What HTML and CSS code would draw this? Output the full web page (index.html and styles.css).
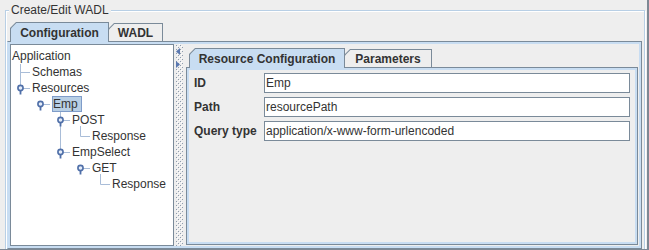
FILE: index.html
```html
<!DOCTYPE html>
<html lang="en">
<head>
  <meta charset="UTF-8" />
  <title>Create/Edit WADL</title>
  <link rel="stylesheet" href="styles.css">
</head>
<body>
  <div class="frame">
    <div class="titled">
      <span class="titled-caption">Create/Edit WADL</span>

      <div class="tabbed outer">
        <div class="tabstrip">
          <div class="tab selected tab-config"><div class="tab-face">Configuration</div></div>
          <div class="tab tab-wadl"><div class="tab-face">WADL</div></div>
        </div>
        <div class="tabbody outer-body">
          <div class="split">

            <!-- resource tree -->
            <div class="tree">
              <svg class="tree-lines" width="162" height="200" viewBox="0 0 162 200">
                <g stroke="#a9bdd8" stroke-width="1" fill="none">
                  <path d="M9.5 19V40M9.5 27.5H19" />
                  <path d="M12 43.5H19" />
                  <path d="M32 59.5H39" />
                  <path d="M49.5 66V104M52 75.5H59M52 107.5H59" />
                  <path d="M69.5 81V91.5H79" />
                  <path d="M72 123.5H79" />
                  <path d="M89.5 129V139.5H99" />
                </g>
                <g class="knob">
                  <circle cx="9.5" cy="43" r="2.6" />
                  <path d="M9.5 45.5V49.5" />
                  <circle cx="29.5" cy="59" r="2.6" />
                  <path d="M29.5 61.5V65.5" />
                  <circle cx="49.5" cy="75" r="2.6" />
                  <path d="M49.5 77.5V81.5" />
                  <circle cx="49.5" cy="107" r="2.6" />
                  <path d="M49.5 109.5V113.5" />
                  <circle cx="69.5" cy="123" r="2.6" />
                  <path d="M69.5 125.5V129.5" />
                </g>
              </svg>
              <div class="node lv0"><span class="node-label">Application</span></div>
              <div class="node lv1"><span class="node-label">Schemas</span></div>
              <div class="node lv1"><span class="node-label">Resources</span></div>
              <div class="node lv2"><span class="node-label selected">Emp</span></div>
              <div class="node lv3"><span class="node-label">POST</span></div>
              <div class="node lv4"><span class="node-label">Response</span></div>
              <div class="node lv3"><span class="node-label">EmpSelect</span></div>
              <div class="node lv4"><span class="node-label">GET</span></div>
              <div class="node lv5"><span class="node-label">Response</span></div>
            </div>

            <!-- split pane divider -->
            <div class="divider">
              <svg width="10" height="202" viewBox="0 0 10 202">
                <defs>
                  <pattern id="bumps" x="2" y="1" width="4" height="4" patternUnits="userSpaceOnUse">
                    <rect x="0" y="0" width="1" height="1" fill="#8f9cad" />
                    <rect x="1" y="1" width="1" height="1" fill="#ffffff" />
                    <rect x="2" y="2" width="1" height="1" fill="#8f9cad" />
                    <rect x="3" y="3" width="1" height="1" fill="#ffffff" />
                  </pattern>
                </defs>
                <rect x="2" y="0" width="7" height="202" fill="url(#bumps)" />
                <polygon points="6,4 2,7.5 6,11" fill="#5a78b0" />
                <polygon points="2,17 6,20.5 2,24" fill="#5a78b0" />
              </svg>
            </div>

            <!-- resource editor -->
            <div class="right">
              <div class="tabbed inner">
                <div class="tabstrip">
                  <div class="tab selected tab-resource"><div class="tab-face">Resource Configuration</div></div>
                  <div class="tab tab-params"><div class="tab-face">Parameters</div></div>
                </div>
                <div class="tabbody inner-body">
                  <div class="form">
                    <label class="form-label">ID</label>
                    <div class="field">Emp</div>
                    <label class="form-label">Path</label>
                    <div class="field">resourcePath</div>
                    <label class="form-label">Query type</label>
                    <div class="field">application/x-www-form-urlencoded</div>
                  </div>
                </div>
              </div>
            </div>

          </div>
        </div>
      </div>
    </div>
  </div>
</body>
</html>
```

FILE: styles.css
```css
body {
  margin: 0;
  background: #eeeeee;
  color: #333333;
  font-family: "Liberation Sans", Arial, sans-serif;
  font-size: 12px;
}

.frame {
  width: 649px;
  height: 250px;
  box-sizing: border-box;
  padding: 10px 0 0 5px;
  border-right: 2px solid #7d8894;
  border-bottom: 1px solid #7d8894;
  overflow: hidden;
  background: #eeeeee;
}

.titled {
  position: relative;
  width: 640px;
  height: 260px;
  box-sizing: border-box;
  padding-top: 11px;
  border: 1px solid #b8cfe5;
  box-shadow: inset 1px 1px 0 #ffffff, 1px 1px 0 #ffffff;
}

.titled-caption {
  position: absolute;
  top: -8px;
  left: 3px;
  padding: 0 2px;
  line-height: 14px;
  background: #eeeeee;
}

/* tabs */

.tabbed.outer {
  width: 635px;
  margin-left: 1px;
}

.tabstrip {
  display: flex;
  align-items: flex-start;
  height: 19px;
  padding-left: 3px;
}

.tab {
  position: relative;
  z-index: 1;
  height: 18px;
  margin-top: 1px;
  box-sizing: border-box;
  padding: 1px 1px 0 1px;
  background: #7a8a99;
  clip-path: polygon(0 6px, 6px 0, 100% 0, 100% 100%, 0 100%);
}

.tab + .tab {
  margin-left: -1px;
}

.tab.selected {
  z-index: 2;
  height: 20px;
  margin-top: 0;
  margin-bottom: -1px;
}

.tab-face {
  height: 100%;
  display: flex;
  align-items: center;
  justify-content: center;
  font-weight: bold;
  background: #eeeeee;
  clip-path: polygon(0 5.4px, 5.4px 0, 100% 0, 100% 100%, 0 100%);
}

.tab.selected .tab-face {
  background: #c8ddf2;
}

.tab-config { width: 99px; }
.tab-wadl { width: 55px; }
.tab-resource { width: 156px; }
.tab-params { width: 88px; }

.tabbody {
  box-sizing: border-box;
  border: 1px solid #7a8a99;
  padding: 2px;
  background: #c8ddf2;
}

.outer-body {
  height: 208px;
  border-left-color: #c8ddf2;
}

/* split pane */

.split {
  display: flex;
  height: 202px;
  background: #eeeeee;
}

.tree {
  position: relative;
  width: 164px;
  box-sizing: border-box;
  padding-top: 3px;
  border: 1px solid #7a8a99;
  background: #ffffff;
}

.tree-lines {
  position: absolute;
  top: 0;
  left: 0;
}

.knob circle {
  fill: #e4ecf8;
  stroke: #4f6fa8;
  stroke-width: 1.6;
}

.knob path {
  stroke: #4f6fa8;
  stroke-width: 1.8;
}

.node {
  position: relative;
  display: flex;
  align-items: center;
  height: 16px;
  white-space: nowrap;
}

.lv0 { padding-left: 0; }
.lv1 { padding-left: 20px; }
.lv2 { padding-left: 40px; }
.lv3 { padding-left: 60px; }
.lv4 { padding-left: 80px; }
.lv5 { padding-left: 100px; }

.node-label {
  display: block;
  line-height: 14px;
  border: 1px solid transparent;
}

.node-label.selected {
  margin-left: 1px;
  padding-right: 3px;
  background: #b8cfe5;
  border-color: #7f9cc9;
}

.divider {
  width: 10px;
  flex: none;
}

.divider svg {
  display: block;
}

.right {
  flex: 1;
  display: flex;
  flex-direction: column;
  padding: 4px 1px 1px 2px;
}

.tabbed.inner {
  flex: 1;
  display: flex;
  flex-direction: column;
}

.inner-body {
  flex: 1;
}

/* resource form */

.form {
  height: 100%;
  box-sizing: border-box;
  display: grid;
  grid-template-columns: 70px 1fr;
  grid-auto-rows: 20px;
  row-gap: 4px;
  align-items: center;
  align-content: start;
  padding: 3px 5px;
  background: #eeeeee;
}

.form-label {
  font-weight: bold;
}

.field {
  height: 20px;
  box-sizing: border-box;
  padding: 0 1px;
  line-height: 18px;
  border: 1px solid #7a8a99;
  background: #ffffff;
  white-space: nowrap;
  overflow: hidden;
}
```
